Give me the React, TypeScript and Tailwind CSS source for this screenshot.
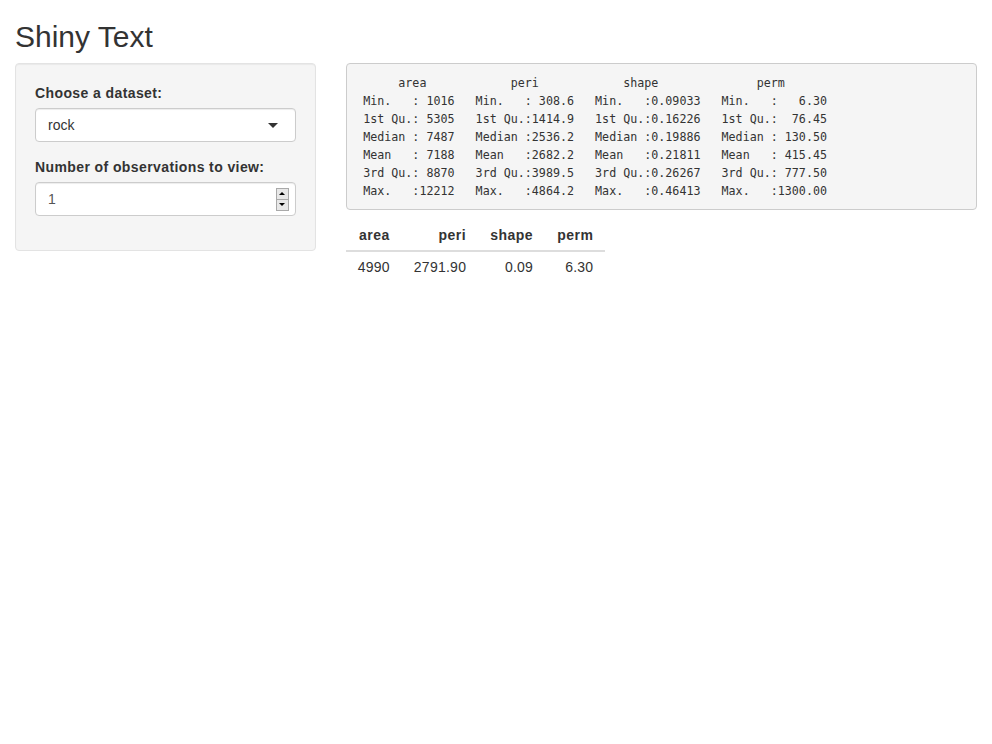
import React from 'react';

const SANS = "font-['Liberation_Sans',Arial,sans-serif]";

const header =
  ' '.repeat(6) + 'area' + ' '.repeat(12) + 'peri' + ' '.repeat(12) + 'shape' + ' '.repeat(14) + 'perm';

const rows = [
  ['Min.   : 1016', 'Min.   : 308.6', 'Min.   :0.09033', 'Min.   :   6.30'],
  ['1st Qu.: 5305', '1st Qu.:1414.9', '1st Qu.:0.16226', '1st Qu.:  76.45'],
  ['Median : 7487', 'Median :2536.2', 'Median :0.19886', 'Median : 130.50'],
  ['Mean   : 7188', 'Mean   :2682.2', 'Mean   :0.21811', 'Mean   : 415.45'],
  ['3rd Qu.: 8870', '3rd Qu.:3989.5', '3rd Qu.:0.26267', '3rd Qu.: 777.50'],
  ['Max.   :12212', 'Max.   :4864.2', 'Max.   :0.46413', 'Max.   :1300.00'],
];

const summary = [header, ...rows.map((r) => ' ' + r.join('   ') + '  ')].join('\n');

function Spinner() {
  return (
    <div className="flex h-[23px] w-[13px] flex-col">
      <div className="flex h-[12px] items-center justify-center border border-[#a9a9a9] bg-[#e8e8e8]">
        <span className="h-0 w-0 border-x-[3px] border-b-[3px] border-x-transparent border-b-black" />
      </div>
      <div className="-mt-px flex h-[12px] items-center justify-center border border-[#a9a9a9] bg-[#e8e8e8]">
        <span className="h-0 w-0 border-x-[3px] border-t-[3px] border-x-transparent border-t-black" />
      </div>
    </div>
  );
}

export default function App() {
  return (
    <div className={`min-h-screen bg-white px-[15px] text-[14px] leading-[20px] text-[#333] ${SANS}`}>
      <h2 className="mt-5 mb-[10px] text-[30px] font-normal leading-[33px]">Shiny Text</h2>

      <div className="-mx-[15px] flex">
        <div className="w-1/3 px-[15px]">
          <div className="mb-5 rounded border border-[#e3e3e3] bg-[#f5f5f5] p-[19px] shadow-[inset_0_1px_1px_rgba(0,0,0,0.05)]">
            <div className="mb-[15px]">
              <label className="mb-[5px] block font-bold tracking-[0.4px]">Choose a dataset:</label>
              <div className="flex h-[34px] items-center justify-between rounded border border-[#ccc] bg-white px-3 shadow-[inset_0_1px_1px_rgba(0,0,0,0.075)]">
                <span>rock</span>
                <span className="mr-[5px] h-0 w-0 border-x-[5px] border-t-[5px] border-x-transparent border-t-[#333]" />
              </div>
            </div>
            <div className="mb-[15px]">
              <label className="mb-[5px] block font-bold tracking-[0.4px]">Number of observations to view:</label>
              <div className="flex h-[34px] items-center justify-between rounded border border-[#ccc] bg-white pl-3 pr-[6px] text-[#555] shadow-[inset_0_1px_1px_rgba(0,0,0,0.075)]">
                <span>1</span>
                <Spinner />
              </div>
            </div>
          </div>
        </div>

        <div className="w-2/3 px-[15px]">
          <pre className="mb-[10px] whitespace-pre rounded border border-[#ccc] bg-[#f5f5f5] p-[9.5px] font-['DejaVu_Sans_Mono',monospace] text-[11.68px] leading-[18px] text-[#333]">
            {summary}
          </pre>
          <table className="border-collapse">
            <thead>
              <tr className="border-b-2 border-[#ddd]">
                <th className="px-3 py-[5px] text-right font-bold tracking-[0.5px]">area</th>
                <th className="px-3 py-[5px] text-right font-bold tracking-[0.5px]">peri</th>
                <th className="px-3 py-[5px] text-right font-bold tracking-[0.5px]">shape</th>
                <th className="px-3 py-[5px] text-right font-bold tracking-[0.5px]">perm</th>
              </tr>
            </thead>
            <tbody>
              <tr className="tracking-[0.25px]">
                <td className="px-3 py-[5px] text-right">4990</td>
                <td className="px-3 py-[5px] text-right">2791.90</td>
                <td className="px-3 py-[5px] text-right">0.09</td>
                <td className="px-3 py-[5px] text-right">6.30</td>
              </tr>
            </tbody>
          </table>
        </div>
      </div>
    </div>
  );
}
